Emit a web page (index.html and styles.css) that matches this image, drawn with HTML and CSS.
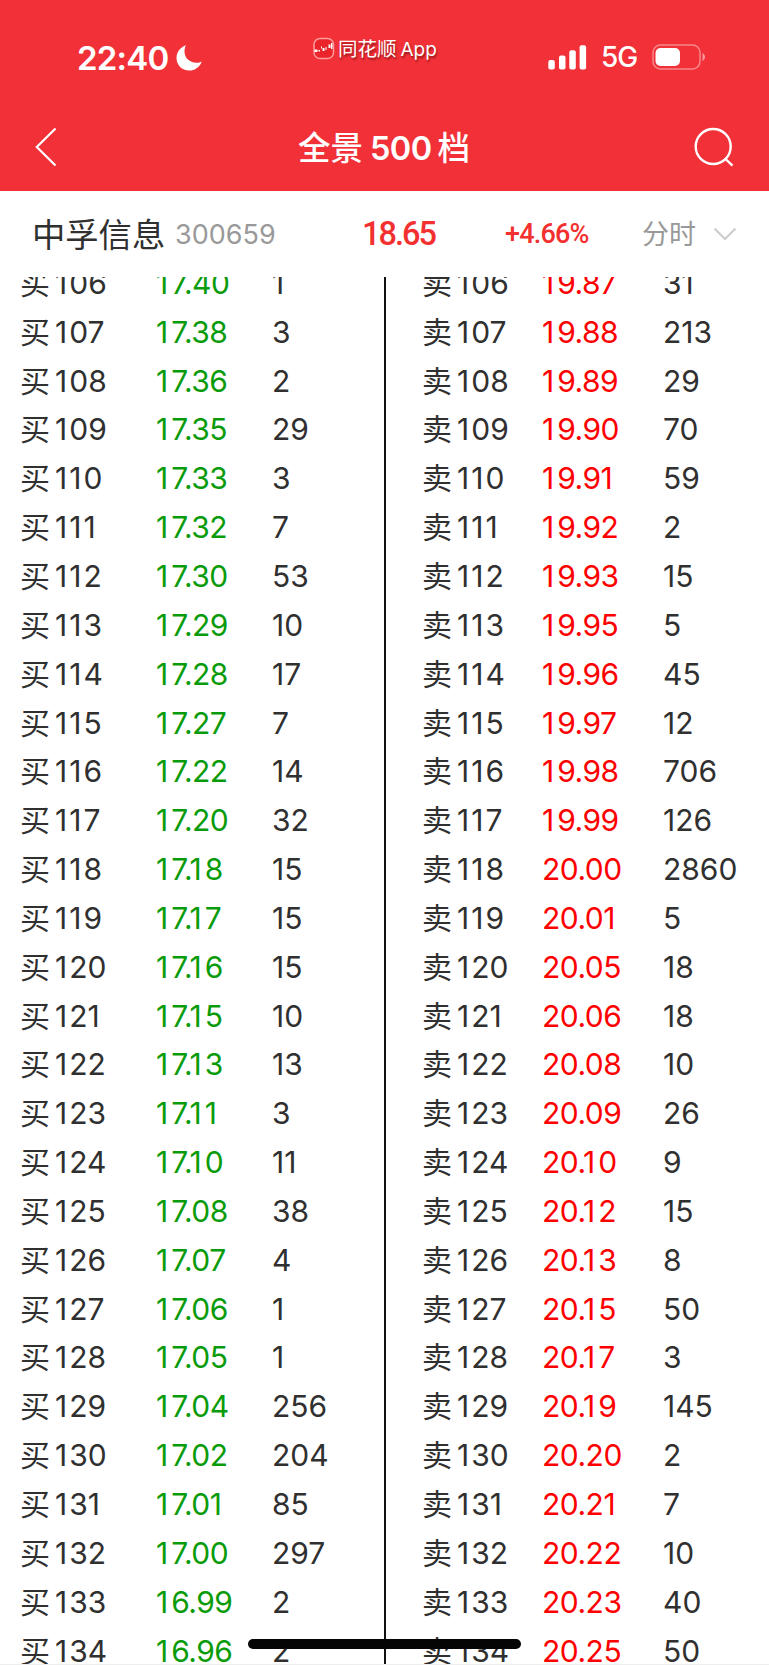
FILE: index.html
```html
<!DOCTYPE html>
<html lang="zh-CN">
<head>
    <meta charset="utf-8">
    <title>全景500档</title>
    <link rel="stylesheet" href="styles.css">
</head>
<body>
    <header class="header">
        <div class="status">
            <div class="clock">
                <span class="time">22:40</span>
                <svg class="moon" width="26" height="26" viewBox="0 0 26 26"><path d="M10 0.3C4.500 2.200 0.500 7 0.500 13C0.500 20 6 25.500 13 25.500C19 25.500 24 21.800 25.700 16.400C24.500 17.200 22.500 17.700 20.500 17.700C13.500 17.700 8.500 13 8.500 6.500C8.500 4 9 2 10 0.300Z" fill="#fff"/></svg>
            </div>
            <div class="brand">
                <svg width="22" height="23" viewBox="0 0 22 23"><rect x="1" y="1.500" width="19.500" height="20" rx="6" fill="#e9242b" stroke="#ff9a9d" stroke-width="1.500"/><path d="M1.500 12.500h3v2.500h-3zM5.500 13h1.500v1.500h-1.500zM8 9.500h1v2h-1zM9.500 11h2v3h-2zM12.500 10h1v3h-1zM15.500 7.500h2v3.500h-2zM18 6h1.500v6h-1.500z" fill="#fff"/></svg>
                <span class="brand-name">同花顺<span class="brand-app">App</span></span>
            </div>
            <div class="signals">
                <svg width="39" height="25" viewBox="0 0 39 25" fill="#fff"><rect x="0.300" y="15" width="6.500" height="9.500" rx="2"/><rect x="11" y="10.500" width="6.500" height="14" rx="2"/><rect x="21.300" y="5.300" width="6.500" height="19.200" rx="2"/><rect x="31.600" y="0.300" width="6.500" height="24.200" rx="2"/></svg>
                <span class="net">5G</span>
                <svg width="54" height="26" viewBox="0 0 54 26"><rect x="1" y="1" width="47" height="24" rx="7.500" fill="none" stroke="#fff" stroke-opacity=".42" stroke-width="1.500"/><rect x="3.500" y="4" width="24.500" height="18" rx="5" fill="#fff"/><path d="M50.500 9v8c3.300-1.400 3.300-6.600 0-8z" fill="#fff" fill-opacity=".5"/></svg>
            </div>
        </div>
        <nav class="nav">
            <svg class="back" width="22" height="40" viewBox="0 0 22 40"><path d="M20.500 1.500L1.800 20L20.500 38.500" fill="none" stroke="#fff" stroke-width="2.200"/></svg>
            <h1 class="title">全景<span class="title-num">500</span>档</h1>
            <svg class="search" width="40" height="40" viewBox="0 0 40 40" fill="none" stroke="#fff" stroke-width="2.400"><circle cx="19.200" cy="19.500" r="17.500"/><path d="M31 31.500L38.500 38.700"/></svg>
        </nav>
    </header>

    <section class="quote">
        <span class="stock">中孚信息</span>
        <span class="code">300659</span>
        <span class="last">18.65</span>
        <span class="change">+4.66%</span>
        <span class="mode">分时</span>
        <svg class="arrow" width="24" height="14" viewBox="0 0 24 14"><path d="M1.500 1.500L12 12L22.500 1.500" fill="none" stroke="#ccc" stroke-width="2"/></svg>
    </section>

    <main class="book">
        <div class="side buy" id="buy"></div>
        <div class="side sell" id="sell"></div>
    </main>
    <div class="home-bar"></div>

    <script>
        const FIRST = 106;

        const buy = [
            ['17.40', 1], ['17.38', 3], ['17.36', 2], ['17.35', 29], ['17.33', 3],
            ['17.32', 7], ['17.30', 53], ['17.29', 10], ['17.28', 17], ['17.27', 7],
            ['17.22', 14], ['17.20', 32], ['17.18', 15], ['17.17', 15], ['17.16', 15],
            ['17.15', 10], ['17.13', 13], ['17.11', 3], ['17.10', 11], ['17.08', 38],
            ['17.07', 4], ['17.06', 1], ['17.05', 1], ['17.04', 256], ['17.02', 204],
            ['17.01', 85], ['17.00', 297], ['16.99', 2], ['16.96', 2]
        ];

        const sell = [
            ['19.87', 31], ['19.88', 213], ['19.89', 29], ['19.90', 70], ['19.91', 59],
            ['19.92', 2], ['19.93', 15], ['19.95', 5], ['19.96', 45], ['19.97', 12],
            ['19.98', 706], ['19.99', 126], ['20.00', 2860], ['20.01', 5], ['20.05', 18],
            ['20.06', 18], ['20.08', 10], ['20.09', 26], ['20.10', 9], ['20.12', 15],
            ['20.13', 8], ['20.15', 50], ['20.17', 3], ['20.19', 145], ['20.20', 2],
            ['20.21', 7], ['20.22', 10], ['20.23', 40], ['20.25', 50]
        ];

        // 1 is a narrow digit, give it a little more room
        function digits(value) {
            return String(value).replace(/1/g, '<span class="one">1</span>');
        }

        function fill(id, label, rows) {
            document.getElementById(id).innerHTML = rows.map(([price, volume], i) => `
                <div class="row">
                    <span class="level"><span class="label">${label}</span>${digits(FIRST + i)}</span>
                    <span class="price">${digits(price)}</span>
                    <span class="volume">${volume}</span>
                </div>`).join('');
        }

        fill('buy', '买', buy);
        fill('sell', '卖', sell);
    </script>
</body>
</html>
```

FILE: styles.css
```css
* {
    box-sizing: border-box;
}
body {
    margin: 0;
    height: 1665px;
    overflow: hidden;
    position: relative;
    background: #fff;
    color: #303030;
    font-family: Inter, "Noto Sans CJK SC", sans-serif;
}
svg {
    display: block;
    flex: none;
}
.header {
    height: 191px;
    background: #f23038;
    color: #fff;
}
.status {
    height: 105px;
    padding: 36px 63px 0 77px;
    display: grid;
    grid-template-columns: 236px 1fr auto;
    align-items: start;
}
.clock {
    display: flex;
    align-items: center;
    gap: 8px;
    height: 43px;
}
.time {
    font-size: 33px;
    font-weight: 600;
    letter-spacing: -0.8px;
}
.brand {
    display: flex;
    align-items: center;
    gap: 3px;
    height: 24px;
}
.brand-name {
    padding-top: 3px;
    font-size: 19.5px;
    line-height: 24px;
    white-space: nowrap;
    text-shadow: 1px 2px 2px rgba(90, 0, 0, .6);
}
.brand-app {
    margin-left: 4px;
    font-size: 19px;
}
.signals {
    display: flex;
    align-items: center;
    height: 42px;
}
.net {
    width: 35px;
    margin: 0 16px 0 14px;
    font-size: 28px;
    font-weight: 500;
    letter-spacing: -1px;
    white-space: nowrap;
}
.nav {
    height: 86px;
    padding: 0 35px;
    display: grid;
    grid-template-columns: 263px 1fr 40px;
}
.back,
.search {
    margin-top: 22px;
}
.title {
    margin: 0;
    font-size: 32.5px;
    font-weight: 500;
    line-height: 87px;
    white-space: nowrap;
}
.title-num {
    margin: 0 6px 0 7px;
    font-weight: 600;
    letter-spacing: -0.6px;
}
.quote {
    height: 86px;
    padding: 0 32px 0 32px;
    display: grid;
    grid-template-columns: 143px 187px 143px 137px 71px 24px;
    align-items: center;
    white-space: nowrap;
}
.stock {
    padding-bottom: 3px;
    font-size: 33.3px;
}
.code {
    font-size: 27px;
    color: #999;
}
.last,
.change {
    font-family: Roboto, sans-serif;
    font-weight: 500;
    color: #f23030;
}
.last {
    font-size: 32.5px;
    letter-spacing: -2px;
}
.change {
    font-size: 27px;
    letter-spacing: -0.8px;
}
.mode {
    font-size: 27px;
    line-height: 34px;
    padding-top: 2px;
    color: #999;
}
.book {
    height: 1388px;
    overflow: hidden;
    display: grid;
    grid-template-columns: 386px 1fr;
    border-bottom: 1px solid #eee;
}
.side {
    margin-top: -18.5px;
}
.buy {
    padding-left: 20px;
    border-right: 2px solid #111;
}
.sell {
    padding-left: 36px;
}
.row {
    height: 48.846px;
    display: grid;
    align-items: center;
    font-size: 30px;
    line-height: 48px;
    white-space: nowrap;
}
.buy .row {
    grid-template-columns: 136px 116px 1fr;
}
.sell .row {
    grid-template-columns: 120px 121px 1fr;
}
.label {
    margin-right: 5px;
}
.one {
    padding-right: 2px;
}
.price {
    letter-spacing: -0.5px;
}
.price .one {
    padding-right: 3.5px;
}
.buy .price {
    color: #0a9b0a;
}
.sell .price {
    color: #f00;
}
.home-bar {
    position: absolute;
    left: 248px;
    top: 1639px;
    width: 273px;
    height: 10px;
    border-radius: 5px;
    background: #050505;
}
```
